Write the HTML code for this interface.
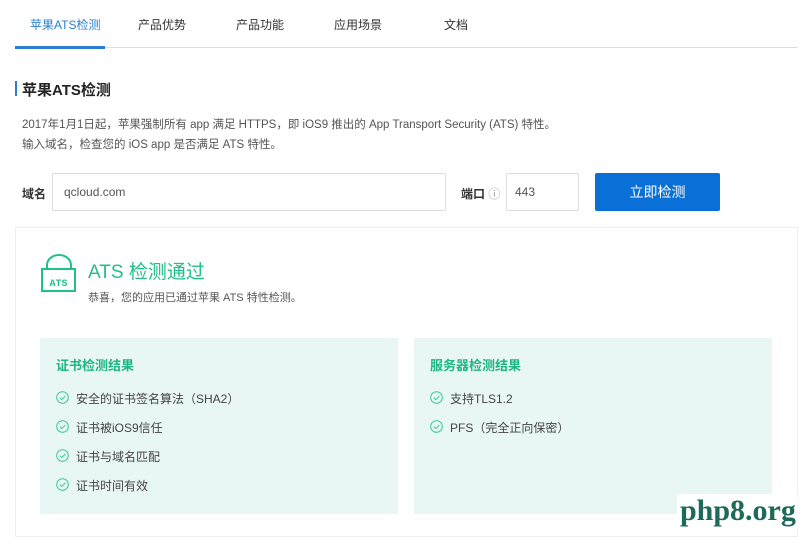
<!DOCTYPE html><html><head><meta charset="utf-8"><style>
*{margin:0;padding:0;box-sizing:border-box}
body{width:804px;height:529px;overflow:hidden;background:#fff;font-family:"Liberation Sans","Noto Sans CJK SC",sans-serif;color:#333;position:relative}
.a{position:absolute;white-space:nowrap}
.tab{font-size:12px;color:#333;top:16px}
.chk{position:absolute;width:13px;height:13px}
.li{font-size:12px;color:#444}
</style></head><body>
<div class="a" style="left:15px;top:47px;width:783px;height:1px;background:#ddd"></div>
<div class="a" style="left:15px;top:46px;width:90px;height:3px;background:#2a7fd4"></div>
<div class="a tab" style="left:30px;color:#2a7fd4">苹果ATS检测</div>
<div class="a tab" style="left:138px">产品优势</div>
<div class="a tab" style="left:236px">产品功能</div>
<div class="a tab" style="left:334px">应用场景</div>
<div class="a tab" style="left:444px">文档</div>
<div class="a" style="left:15px;top:81px;width:2px;height:15px;background:#2a7fd4"></div>
<div class="a" style="left:22px;top:79px;font-size:15px;font-weight:bold;color:#222">苹果ATS检测</div>
<div class="a" style="left:22px;top:116px;font-size:11.5px;color:#555">2017年1月1日起，苹果强制所有 app 满足 HTTPS，即 iOS9 推出的 App Transport Security (ATS) 特性。</div>
<div class="a" style="left:22px;top:136px;font-size:11.5px;color:#555">输入域名，检查您的 iOS app 是否满足 ATS 特性。</div>
<div class="a" style="left:22px;top:185px;font-size:12px;font-weight:bold;color:#333">域名</div>
<div class="a" style="left:52px;top:173px;width:394px;height:38px;border:1px solid #ddd;border-radius:2px"></div>
<div class="a" style="left:64px;top:185px;font-size:12px;color:#555">qcloud.com</div>
<div class="a" style="left:461px;top:185px;font-size:12px;font-weight:bold;color:#333">端口 <span style="font-weight:normal;color:#999">ⓘ</span></div>
<div class="a" style="left:506px;top:173px;width:73px;height:38px;border:1px solid #ddd;border-radius:2px"></div>
<div class="a" style="left:515px;top:185px;font-size:12px;color:#555">443</div>
<div class="a" style="left:595px;top:173px;width:125px;height:38px;background:#0a6fd6;border-radius:2px;color:#fff;font-size:14px;text-align:center;line-height:38px">立即检测</div>
<div class="a" style="left:15px;top:227px;width:783px;height:310px;border:1px solid #eee"></div>
<svg class="a" style="left:40px;top:253px" width="38" height="42" viewBox="0 0 38 42"><path d="M7 16V12a12 10 0 0 1 24 0v4" fill="none" stroke="#1fc08a" stroke-width="2"/><rect x="2" y="16" width="33" height="22" fill="none" stroke="#1fc08a" stroke-width="2"/><text x="18.5" y="33" font-size="10" font-weight="bold" fill="#1fc08a" text-anchor="middle" font-family="Liberation Mono,monospace">ATS</text></svg>
<div class="a" style="left:88px;top:257px;font-size:19px;color:#1fc08a">ATS 检测通过</div>
<div class="a" style="left:88px;top:289px;font-size:11px;color:#555">恭喜，您的应用已通过苹果 ATS 特性检测。</div>
<div class="a" style="left:40px;top:338px;width:358px;height:176px;background:#e9f7f4"></div>
<div class="a" style="left:414px;top:338px;width:358px;height:176px;background:#e9f7f4"></div>
<div class="a" style="left:56px;top:355px;font-size:13px;font-weight:bold;color:#1fb585">证书检测结果</div>
<div class="a" style="left:430px;top:355px;font-size:13px;font-weight:bold;color:#1fb585">服务器检测结果</div>
<svg width="0" height="0" style="position:absolute"><defs><symbol id="c" viewBox="0 0 13 13"><circle cx="6.5" cy="6.5" r="5.8" fill="none" stroke="#3cc896" stroke-width="1"/><path d="M3.8 6.6l2 2 3.5-3.6" fill="none" stroke="#3cc896" stroke-width="1"/></symbol></defs></svg>
<svg class="chk" style="left:56px;top:391px"><use href="#c"/></svg><div class="a li" style="left:76px;top:390px">安全的证书签名算法（SHA2）</div>
<svg class="chk" style="left:56px;top:420px"><use href="#c"/></svg><div class="a li" style="left:76px;top:419px">证书被iOS9信任</div>
<svg class="chk" style="left:56px;top:449px"><use href="#c"/></svg><div class="a li" style="left:76px;top:448px">证书与域名匹配</div>
<svg class="chk" style="left:56px;top:478px"><use href="#c"/></svg><div class="a li" style="left:76px;top:477px">证书时间有效</div>
<svg class="chk" style="left:430px;top:391px"><use href="#c"/></svg><div class="a li" style="left:450px;top:390px">支持TLS1.2</div>
<svg class="chk" style="left:430px;top:420px"><use href="#c"/></svg><div class="a li" style="left:450px;top:419px">PFS（完全正向保密）</div>
<div class="a" style="left:677px;top:494px;font-family:'Liberation Serif',serif;font-weight:bold;font-size:30px;line-height:34px;color:#1d6a5a;background:#fff;padding:0 3px">php8.org</div>
</body></html>
